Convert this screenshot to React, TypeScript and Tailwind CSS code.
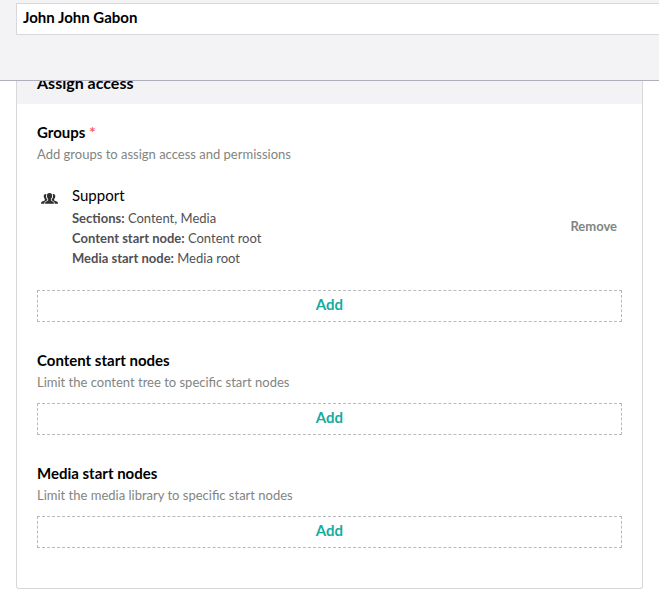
type StartNodeSection = {
  title: string;
  description: string;
};

const startNodeSections: StartNodeSection[] = [
  {
    title: "Content start nodes",
    description: "Limit the content tree to specific start nodes",
  },
  {
    title: "Media start nodes",
    description: "Limit the media library to specific start nodes",
  },
];

const groupDetails = [
  { label: "Sections:", value: "Content, Media" },
  { label: "Content start node:", value: "Content root" },
  { label: "Media start node:", value: "Media root" },
];

const UsersIcon = () => (
  <svg width="17" height="11" viewBox="0 0 17 11" fill="#303033">
    <path d="M4.700 1C3.400 1 2.600 2 2.700 3.500c.1 1.200.5 2 1.100 2.600v1.300L1.200 8.600C.4 9 0 9.600 0 10.700h3.300c0-1.400.5-2 1.400-2.500l1.700-.9V6.600C5.500 5.700 5 4.500 5 3c0-.8.200-1.400.5-1.900-.2-.1-.5-.1-.8-.1z" />
    <path d="M12.300 1c1.300 0 2.100 1 2 2.500-.1 1.200-.5 2-1.100 2.600v1.300l2.600 1.200c.8.4 1.200 1 1.200 2.100h-3.300c0-1.400-.5-2-1.400-2.500l-1.700-.9V6.600c.9-.9 1.400-2.100 1.400-3.600 0-.8-.2-1.400-.5-1.900.2-.1.500-.1.800-.1z" />
    <path d="M8.500 0C6.700 0 5.800 1.200 5.900 3c.1 1.400.5 2.400 1.200 3.100v1.500L5 8.700c-.7.400-1 .9-1 2h9c0-1.100-.3-1.600-1-2L9.900 7.600V6.100c.7-.7 1.100-1.700 1.200-3.100C11.200 1.200 10.300 0 8.500 0z" />
  </svg>
);

const AddButton = () => (
  <button className="block h-8 w-full border border-dashed border-[#bbbabb] pb-1 text-[15px] leading-5 font-bold text-[#16aba0]">
    Add
  </button>
);

const SectionHeading = ({
  title,
  description,
  required,
}: StartNodeSection & { required?: boolean }) => (
  <div>
    <h3 className="text-[15px] leading-5 font-bold text-black">
      {title}
      {required && <span className="ml-1 text-[#fe5a56]">*</span>}
    </h3>
    <p className="mt-[3px] text-[13px] leading-[18px] text-[#818582]">
      {description}
    </p>
  </div>
);

const App = () => {
  return (
    <div className="flex h-[604px] w-full flex-col overflow-hidden bg-white font-['Lato',sans-serif]">
      <header className="h-[81px] shrink-0 border-b border-[#b0adbd] bg-[#f3f3f5] pt-[3px] pl-4">
        <div className="h-8 border-y border-l border-[#d8d7d9] bg-white pl-[6px] text-[15px] leading-[26px] font-bold text-black">
          John John Gabon
        </div>
      </header>

      <main className="mr-4 ml-4 flex h-[508px] w-[627px] shrink-0 flex-col rounded-b-[3px] border border-t-0 border-[#d8d7d9]">
        <div className="flex h-[23px] shrink-0 items-end overflow-hidden bg-[#f3f3f5] px-5 pb-[11px]">
          <h2 className="text-[16px] leading-5 font-bold text-black">
            Assign access
          </h2>
        </div>

        <div className="flex flex-col px-5 pt-[18px]">
          <SectionHeading
            title="Groups"
            description="Add groups to assign access and permissions"
            required
          />

          <div className="mt-[22px] mb-[21px] flex h-[84px]">
            <div className="flex w-[35px] shrink-0 pt-[8px] pl-1">
              <UsersIcon />
            </div>
            <div className="flex-1">
              <div className="mb-[3px] text-[15px] leading-5 text-black">
                Support
              </div>
              {groupDetails.map((detail) => (
                <div
                  key={detail.label}
                  className="text-[13px] leading-5 text-[#515054]"
                >
                  <span className="font-bold">{detail.label}</span>{" "}
                  {detail.value}
                </div>
              ))}
            </div>
            <button className="mr-[5px] mb-[2px] self-center text-[13px] leading-5 font-bold text-[#818582]">
              Remove
            </button>
          </div>
          <AddButton />

          {startNodeSections.map((section) => (
            <section key={section.title} className="mt-[28px]">
              <SectionHeading {...section} />
              <div className="mt-[12px]">
                <AddButton />
              </div>
            </section>
          ))}
        </div>
      </main>
    </div>
  );
};

export default App;
